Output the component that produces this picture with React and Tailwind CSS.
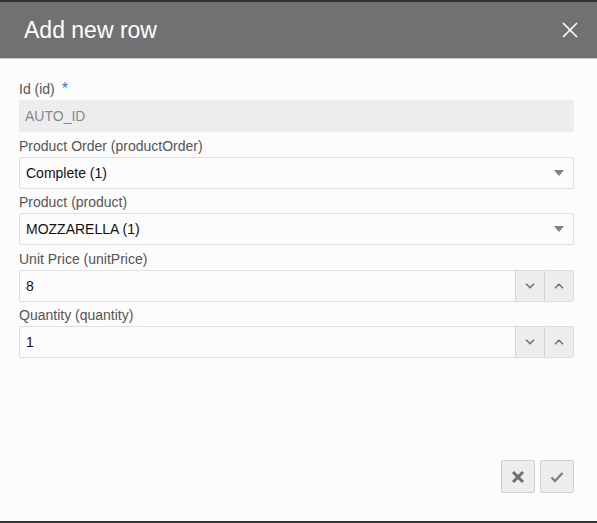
import { ChevronDown, ChevronUp } from 'lucide-react';

const font = { fontFamily: '"Liberation Sans", Arial, sans-serif' };

function Label({ children, required, short }) {
  return (
    <div className={`${short ? 'h-[24px]' : 'h-[25px]'} flex items-end pb-[4px] text-[14px] leading-none text-[#555]`}>
      {children}
      {required && <span className="ml-[7px] text-[#2a7fc1] text-[16px] leading-none relative top-[4px] self-start mt-[2px]">*</span>}
    </div>
  );
}

function SelectField({ value }) {
  return (
    <div className="h-[32px] border border-[#dedede] rounded-[2px] bg-[#fcfcfc] flex items-center justify-between pl-[6px] pr-[9px]">
      <span className="text-[14px] text-[#111]">{value}</span>
      <svg width="10" height="6" viewBox="0 0 10 6">
        <path d="M0 0 H10 L5 6 Z" fill="#808080" />
      </svg>
    </div>
  );
}

function NumberField({ value }) {
  return (
    <div className="h-[32px] border border-[#dedede] rounded-[2px] bg-[#fcfcfc] flex">
      <div className="flex-1 flex items-center pl-[6px] text-[14px] text-[#111]">{value}</div>
      <button className="w-[29px] border-l border-[#d4d4d4] bg-[#ededed] flex items-center justify-center">
        <ChevronDown size={14} strokeWidth={3} color="#777" />
      </button>
      <button className="w-[29px] border-l border-[#d4d4d4] bg-[#ededed] flex items-center justify-center">
        <ChevronUp size={14} strokeWidth={3} color="#777" />
      </button>
    </div>
  );
}

export default function App() {
  return (
    <div className="w-[597px] h-[523px] flex flex-col bg-[#fcfcfc] border-t-2 border-b-2 border-[#333]" style={font}>
      <div className="h-[57px] bg-[#717171] border-b border-[#c8c8c8] flex items-center justify-between pl-[24px] pr-[19px] shrink-0">
        <h1 className="text-[23px] text-white leading-none pt-[1px]">Add new row</h1>
        <svg width="16" height="16" viewBox="0 0 16 16">
          <path d="M1 1 L15 15 M15 1 L1 15" stroke="#fff" strokeWidth="1.6" />
        </svg>
      </div>
      <div className="flex-1 flex flex-col px-[19px] pt-[16px] pr-[23px]">
        <Label required>Id (id)</Label>
        <div className="h-[32px] bg-[#ededed] rounded-[2px] flex items-center pl-[6px] text-[14px] text-[#888]">AUTO_ID</div>
        <Label>Product Order (productOrder)</Label>
        <SelectField value="Complete (1)" />
        <Label short>Product (product)</Label>
        <SelectField value="MOZZARELLA (1)" />
        <Label>Unit Price (unitPrice)</Label>
        <NumberField value="8" />
        <Label short>Quantity (quantity)</Label>
        <NumberField value="1" />
        <div className="flex-1" />
        <div className="flex justify-end gap-[5px] pb-[28px]">
          <button className="w-[34px] h-[33px] border border-[#cfcfcf] rounded-[2px] bg-[#ededed] flex items-center justify-center">
            <svg width="14" height="14" viewBox="0 0 14 14">
              <path d="M2 2 L12 12 M12 2 L2 12" stroke="#6f6f6f" strokeWidth="3" />
            </svg>
          </button>
          <button className="w-[34px] h-[33px] border border-[#cfcfcf] rounded-[2px] bg-[#ededed] flex items-center justify-center">
            <svg width="14" height="12" viewBox="0 0 14 12">
              <path d="M1.5 6.5 L5 10 L12.5 2" stroke="#808080" strokeWidth="2.4" fill="none" />
            </svg>
          </button>
        </div>
      </div>
    </div>
  );
}
